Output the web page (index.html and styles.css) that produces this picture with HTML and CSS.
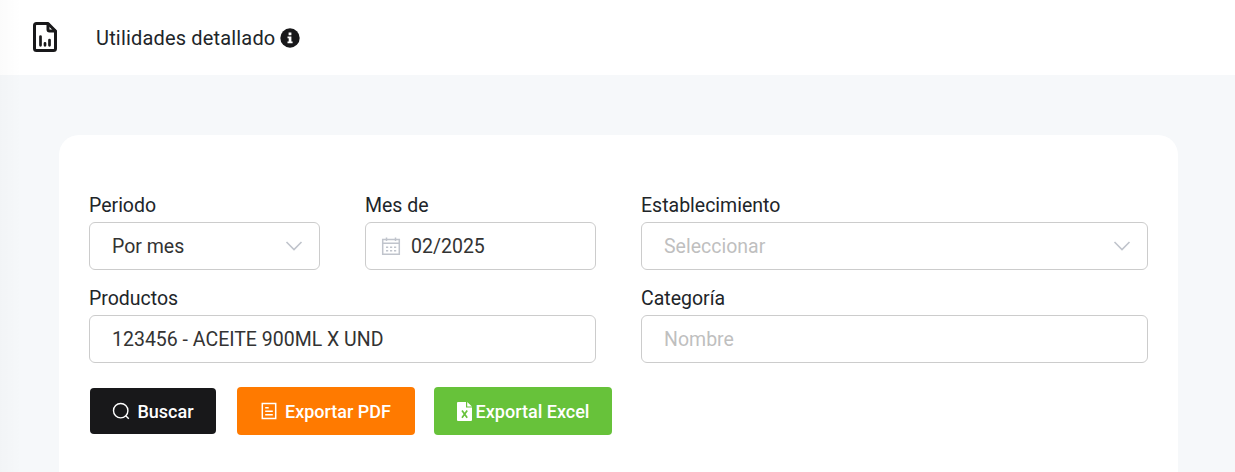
FILE: index.html
```html
<!DOCTYPE html>
<html lang="es">
<head>
<meta charset="utf-8">
<title>Utilidades detallado</title>
<link rel="stylesheet" href="styles.css">
</head>
<body>
<header class="header">
  <svg class="header-icon" viewBox="0 0 26 32" fill="none" stroke="#18181a" stroke-width="3" stroke-linecap="round" stroke-linejoin="round"><path d="M4.5 2.5H16L23.5 10V27.500Q23.500 29.500 21.500 29.500H4.500Q2.500 29.500 2.500 27.500V4.500Q2.500 2.500 4.500 2.500Z"/><path d="M16 3V8.500Q16 10 17.500 10H23"/><path d="M8.500 15.500V24.300M13 22.300V24.300M17.500 19V24.300" stroke-width="2.700"/></svg>
  <h1 class="title">Utilidades detallado</h1>
  <svg class="info" viewBox="0 0 20 20"><circle cx="10" cy="10" r="9.700" fill="#18181a"/><path fill="#fff" d="M8.600 4.500h2.800v2.700H8.600zM7.500 8.500h3.900v4.900h1.200v1.800H7.500v-1.800h1.200v-3.100H7.500z"/></svg>
</header>
<main class="main">
  <section class="card">
    <div class="grid">
      <div class="field"><span class="label">Periodo</span><div class="control"><span class="value">Por mes</span><svg class="chevron" viewBox="0 0 18 12"><path d="M1.500 2L9 9.500L16.500 2"/></svg></div></div>
      <div class="field"><span class="label">Mes de</span><div class="control control-date"><svg class="calendar" viewBox="0 0 20 20"><path d="M1.700 3.500H18.300V18.300H1.700ZM1.700 7.300H18.300M5.500 1.500V5M14.500 1.500V5"/><path d="M5 11.200H7.200M9 11.200H11.200M13 11.200H15.200M5 14.800H7.200M9 14.800H11.200M13 14.800H15.200"/></svg><span class="value">02/2025</span></div></div>
      <div class="field wide"><span class="label">Establecimiento</span><div class="control"><span class="placeholder">Seleccionar</span><svg class="chevron" viewBox="0 0 18 12"><path d="M1.500 2L9 9.500L16.500 2"/></svg></div></div>
      <div class="field wide"><span class="label">Productos</span><div class="control"><span class="value">123456 - ACEITE 900ML X UND</span></div></div>
      <div class="field wide"><span class="label">Categoría</span><div class="control"><span class="placeholder">Nombre</span></div></div>
    </div>
    <div class="actions">
      <button class="btn btn-search"><svg class="search-icon" viewBox="0 0 18 18" fill="none" stroke="#fff" stroke-width="1.400"><circle cx="8.700" cy="8.700" r="7.200"/><path d="M13.700 13.700L16.800 16.800"/></svg><span>Buscar</span></button>
      <button class="btn btn-pdf"><svg class="pdf-icon" viewBox="0 0 16 18" fill="none" stroke="#fff" stroke-width="1.500"><path d="M1.300 1.500H14.700V16.500H1.300ZM4.200 5.700H7.700M4.200 9.200H11.800M4.200 12.700H11.800"/></svg><span>Exportar PDF</span></button>
      <button class="btn btn-excel"><svg class="excel-icon" viewBox="0 0 15 19"><path fill="#fff" d="M1 0H9V5.500H15V18Q15 19 14 19H1Q0 19 0 18V1Q0 0 1 0ZM10.200 0L15 4.500H10.200Z"/><path fill="none" stroke="#67c23a" stroke-width="1.700" d="M5 8.500L10.200 15.800M10.200 8.500L5 15.800"/></svg><span>Exportal Excel</span></button>
    </div>
  </section>
</main>
<div class="edge-shadow"></div>
</body>
</html>
```
FILE: styles.css
```css
* { box-sizing: border-box; }
body { margin: 0; height: 472px; overflow: hidden; background: #f6f8fa; color: #212529; font-family: Roboto, sans-serif; font-size: 19.5px; }
svg { display: block; flex: none; }
.header { height: 75px; padding-left: 32px; background: #fff; display: flex; align-items: center; }
.header-icon { width: 26px; height: 32px; margin-bottom: 1px; }
.title { margin: 0 0 0 38px; font-size: 20px; font-weight: 400; letter-spacing: .17px; line-height: 30px; }
.info { width: 20px; height: 20px; margin: 1px 0 0 5px; }
.main { padding: 60px 57px 0 59px; }
.card { height: 337px; padding: 58px 30px 0; border-radius: 20px 20px 0 0; background: #fff; }
.grid { display: grid; grid-template-columns: repeat(4, 1fr); gap: 16px 45px; }
.field { min-width: 0; }
.wide { grid-column: span 2; }
.label { display: block; height: 29px; line-height: 26px; }
.control { height: 48px; padding: 0 16px 0 22px; border: 1px solid #ccc; border-radius: 6px; display: flex; align-items: center; justify-content: space-between; }
.control-date { padding-left: 15px; justify-content: flex-start; gap: 10px; }
.value { color: #333; }
.placeholder { color: #bfbfbf; }
.chevron { width: 18px; height: 12px; fill: none; stroke: #c0c4cc; stroke-width: 1.6; }
.calendar { width: 20px; height: 20px; fill: none; stroke: #c0c4cc; stroke-width: 1.5; }
.actions { display: flex; align-items: center; margin: 24px 0 0 1px; }
.btn { height: 48px; padding: 0; border: 0; border-radius: 4px; display: flex; align-items: center; justify-content: center; color: #fff; font-family: inherit; font-size: 18px; font-weight: 500; }
.btn-search { width: 126px; height: 46px; gap: 7px; margin-right: 21px; background: #18181a; }
.btn-pdf { width: 178px; gap: 8px; margin-right: 19px; background: #ff7a00; }
.btn-excel { width: 178px; gap: 4px; background: #67c23a; }
.search-icon { width: 18px; height: 18px; }
.pdf-icon { width: 16px; height: 18px; }
.excel-icon { width: 15px; height: 19px; }
.edge-shadow { position: absolute; left: 0; top: 0; width: 22px; height: 472px; background: linear-gradient(90deg, rgba(0,0,0,.014), transparent); }
```
